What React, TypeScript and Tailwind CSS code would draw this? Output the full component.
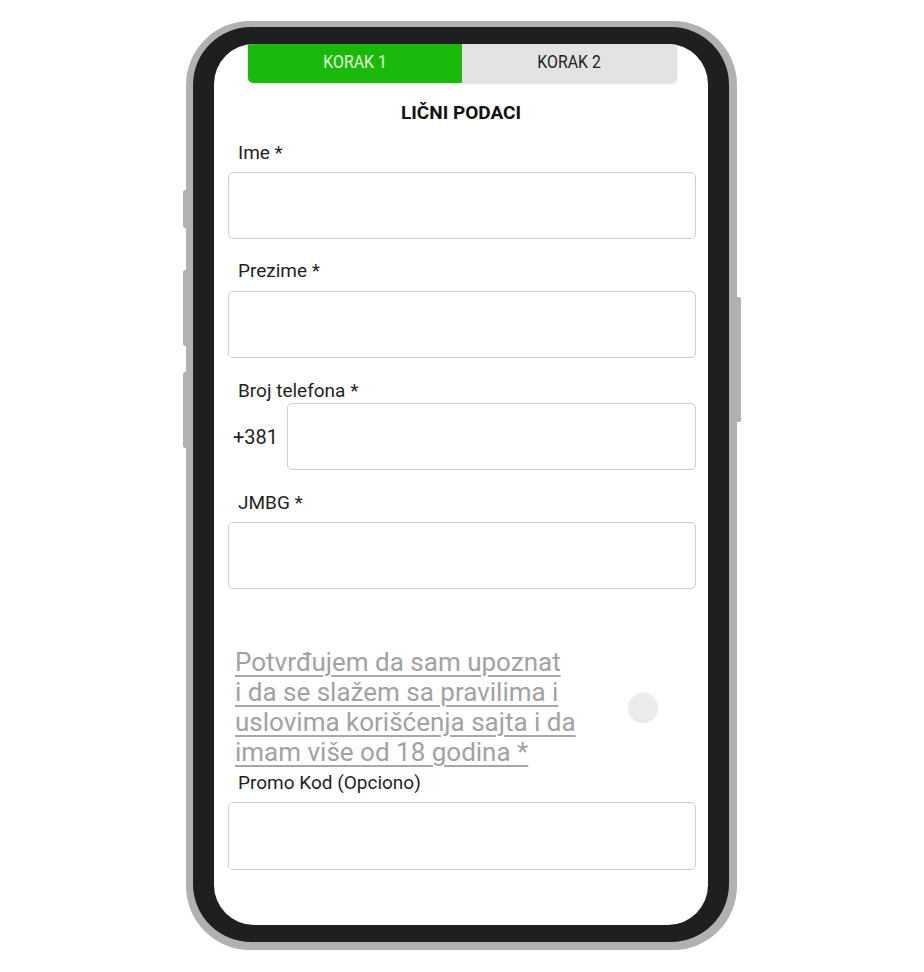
const font = "font-['Roboto',_'Noto_Sans',_sans-serif]";

function Field({ label, top, gap }: { label: string; top: string; gap: string }) {
  return (
    <div className={top}>
      <div className="ml-[10px] text-[19px] leading-[22px] text-[#1f1f1f]">{label}</div>
      <div className={`${gap} h-[67px] rounded-[5px] border-[1.5px] border-[#cdcdcd] bg-white`} />
    </div>
  );
}

function Phone({ children }: { children: React.ReactNode }) {
  return (
    <div className="relative w-[551px] h-[929px]">
      {/* side buttons */}
      <div className="absolute -left-[3px] top-[169px] w-[6px] h-[38px] rounded-l-[2px] bg-[#b1b1b1]" />
      <div className="absolute -left-[3px] top-[249px] w-[6px] h-[76px] rounded-l-[2px] bg-[#b1b1b1]" />
      <div className="absolute -left-[3px] top-[351px] w-[6px] h-[76px] rounded-l-[2px] bg-[#b1b1b1]" />
      <div className="absolute -right-[4px] top-[276px] w-[6px] h-[125px] rounded-r-[2px] bg-[#b1b1b1]" />

      <div className="relative h-full rounded-[64px] bg-[#b1b1b1] pt-[6px] pl-[7px] pr-[8px] pb-[8px]">
        <div className="h-full rounded-[58px] bg-[#1f1f21] px-[21px] py-[17px]">
          <div className="h-full w-full overflow-hidden rounded-[40px] bg-white">{children}</div>
        </div>
      </div>
    </div>
  );
}

export default function App() {
  return (
    <div className={`w-[924px] h-[972px] bg-white pl-[186px] pt-[21px] ${font}`}>
      <Phone>
        {/* steps */}
        <div className="ml-[34px] mr-[31px] flex h-[39px] overflow-hidden rounded-b-[5px] shadow-[0_1px_2px_rgba(0,0,0,0.12)]">
          <div className="flex w-[214px] items-center justify-center bg-[#1bb90c] pb-[4px] text-[18px] text-[#e4f7da]">
            <span className="inline-block scale-x-[0.88]">KORAK 1</span>
          </div>
          <div className="flex flex-1 items-center justify-center bg-[#e3e3e3] pb-[4px] text-[18px] text-[#222222]">
            <span className="inline-block scale-x-[0.88]">KORAK 2</span>
          </div>
        </div>

        <h1 className="mt-[18.5px] text-center text-[19px] leading-[22px] font-bold text-[#111111]">LIČNI PODACI</h1>

        <div className="pl-[14px] pr-[12px]">
          <Field label="Ime *" top="mt-[18px]" gap="mt-[8.5px]" />
          <Field label="Prezime *" top="mt-[20.5px]" gap="mt-[9.5px]" />

          <div className="mt-[21.5px]">
            <div className="ml-[10px] text-[19px] leading-[22px] text-[#1f1f1f]">Broj telefona *</div>
            <div className="mt-[1.5px] flex items-center">
              <span className="ml-[5px] text-[20px] text-[#1f1f1f]">+381</span>
              <div className="ml-[9px] h-[67px] flex-1 rounded-[5px] border-[1.5px] border-[#cdcdcd]" />
            </div>
          </div>

          <Field label="JMBG *" top="mt-[21.5px]" gap="mt-[8.5px]" />

          <div className="mt-[58px] flex items-center">
            <p className="ml-[7px] whitespace-nowrap text-[26px] leading-[30px] text-[#a2a2a2] underline decoration-[1.5px] underline-offset-[4px] decoration-[#a8a8a8]">
              Potvrđujem da sam upoznat
              <br />i da se slažem sa pravilima i
              <br />uslovima korišćenja sajta i da
              <br />imam više od 18 godina *
            </p>
            <div className="ml-auto mr-[39px] h-[28px] w-[28px] rounded-full bg-[#ececec] shadow-[0_1px_3px_rgba(0,0,0,0.18)]" />
          </div>

          <div className="mt-[5px]">
            <div className="ml-[10px] text-[19px] leading-[22px] text-[#1f1f1f]">Promo Kod (Opciono)</div>
            <div className="mt-[8px] h-[68px] rounded-[5px] border-[1.5px] border-[#cdcdcd]" />
          </div>
        </div>
      </Phone>
    </div>
  );
}
